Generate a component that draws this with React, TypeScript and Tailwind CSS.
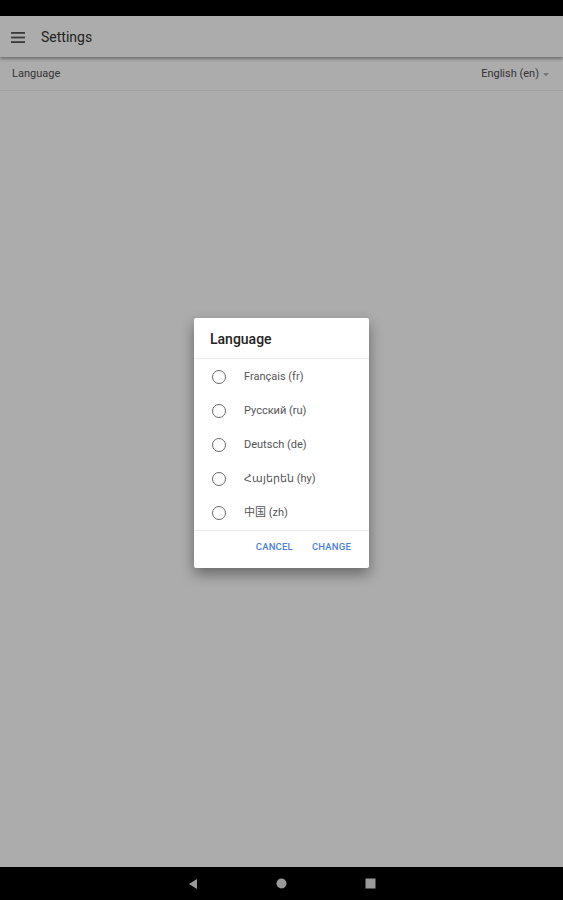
import React from "react";

const langs = ["Français (fr)", "Русский (ru)", "Deutsch (de)", "Հայերեն (hy)", "中国 (zh)"];

export default function App() {
  return (
    <div
      className="w-[563px] h-[900px] flex flex-col bg-[#acacac] overflow-hidden relative"
      style={{ fontFamily: "Roboto, 'Noto Sans', 'Noto Sans CJK SC', sans-serif" }}
    >
      <div className="h-[16px] bg-black shrink-0" />
      <div className="h-[41px] shrink-0 flex items-center pt-[1px] bg-[#acacac] shadow-[0_2px_3px_rgba(0,0,0,0.35)] relative z-10">
        <svg width="14" height="11" viewBox="0 0 14 11" className="ml-[11px]">
          <rect x="0" y="0" width="14" height="1.8" fill="#3a3a3a" />
          <rect x="0" y="4.6" width="14" height="1.8" fill="#3a3a3a" />
          <rect x="0" y="9.2" width="14" height="1.8" fill="#3a3a3a" />
        </svg>
        <span className="ml-[16px] text-[14px] text-[#222]">Settings</span>
      </div>
      <div className="h-[34px] shrink-0 flex items-center justify-between pt-[2px] pl-[12px] pr-[14px] border-b border-[#a2a2a2]">
        <span className="text-[11px] text-[#333]">Language</span>
        <span className="flex items-center gap-[4px] text-[11px] text-[#333]">
          English (en)
          <svg width="6" height="4" viewBox="0 0 6 4">
            <path d="M0 0 L6 0 L3 3.5 Z" fill="#777" />
          </svg>
        </span>
      </div>
      <div className="flex-1" />
      <div className="h-[33px] shrink-0 bg-black flex items-center justify-center gap-[78px]">
        <svg width="10" height="12" viewBox="0 0 10 12">
          <path d="M9 1 L1 6 L9 11 Z" fill="#9a9a9a" />
        </svg>
        <svg width="11" height="11" viewBox="0 0 11 11">
          <circle cx="5.5" cy="5.5" r="5" fill="#9a9a9a" />
        </svg>
        <svg width="11" height="11" viewBox="0 0 11 11">
          <rect x="0.5" y="0.5" width="10" height="10" fill="#9a9a9a" />
        </svg>
      </div>

      <div className="absolute left-[194px] top-[318px] w-[175px] bg-white rounded-[2px] shadow-[0_6px_14px_rgba(0,0,0,0.4)] flex flex-col">
        <div className="h-[41px] flex items-center pt-[3px] px-[16px] border-b border-[#ececec]">
          <span className="text-[14px] font-medium text-[#222]">Language</span>
        </div>
        <div className="flex flex-col pt-[1px]">
          {langs.map((l) => (
            <div key={l} className="h-[34px] flex items-center">
              <div className="ml-[18px] w-[14px] h-[14px] rounded-full border-[1.5px] border-[#6a6a6a]" />
              <span className="ml-[18px] text-[11px] text-[#555]">{l}</span>
            </div>
          ))}
        </div>
        <div className="h-[38px] border-t border-[#ececec] flex items-center justify-end pb-[4px] pr-[18px] gap-[19px]">
          <span className="text-[9.5px] font-medium text-[#4a7fdf] tracking-[0.2px]">CANCEL</span>
          <span className="text-[9.5px] font-medium text-[#4a7fdf] tracking-[0.2px]">CHANGE</span>
        </div>
      </div>
    </div>
  );
}
